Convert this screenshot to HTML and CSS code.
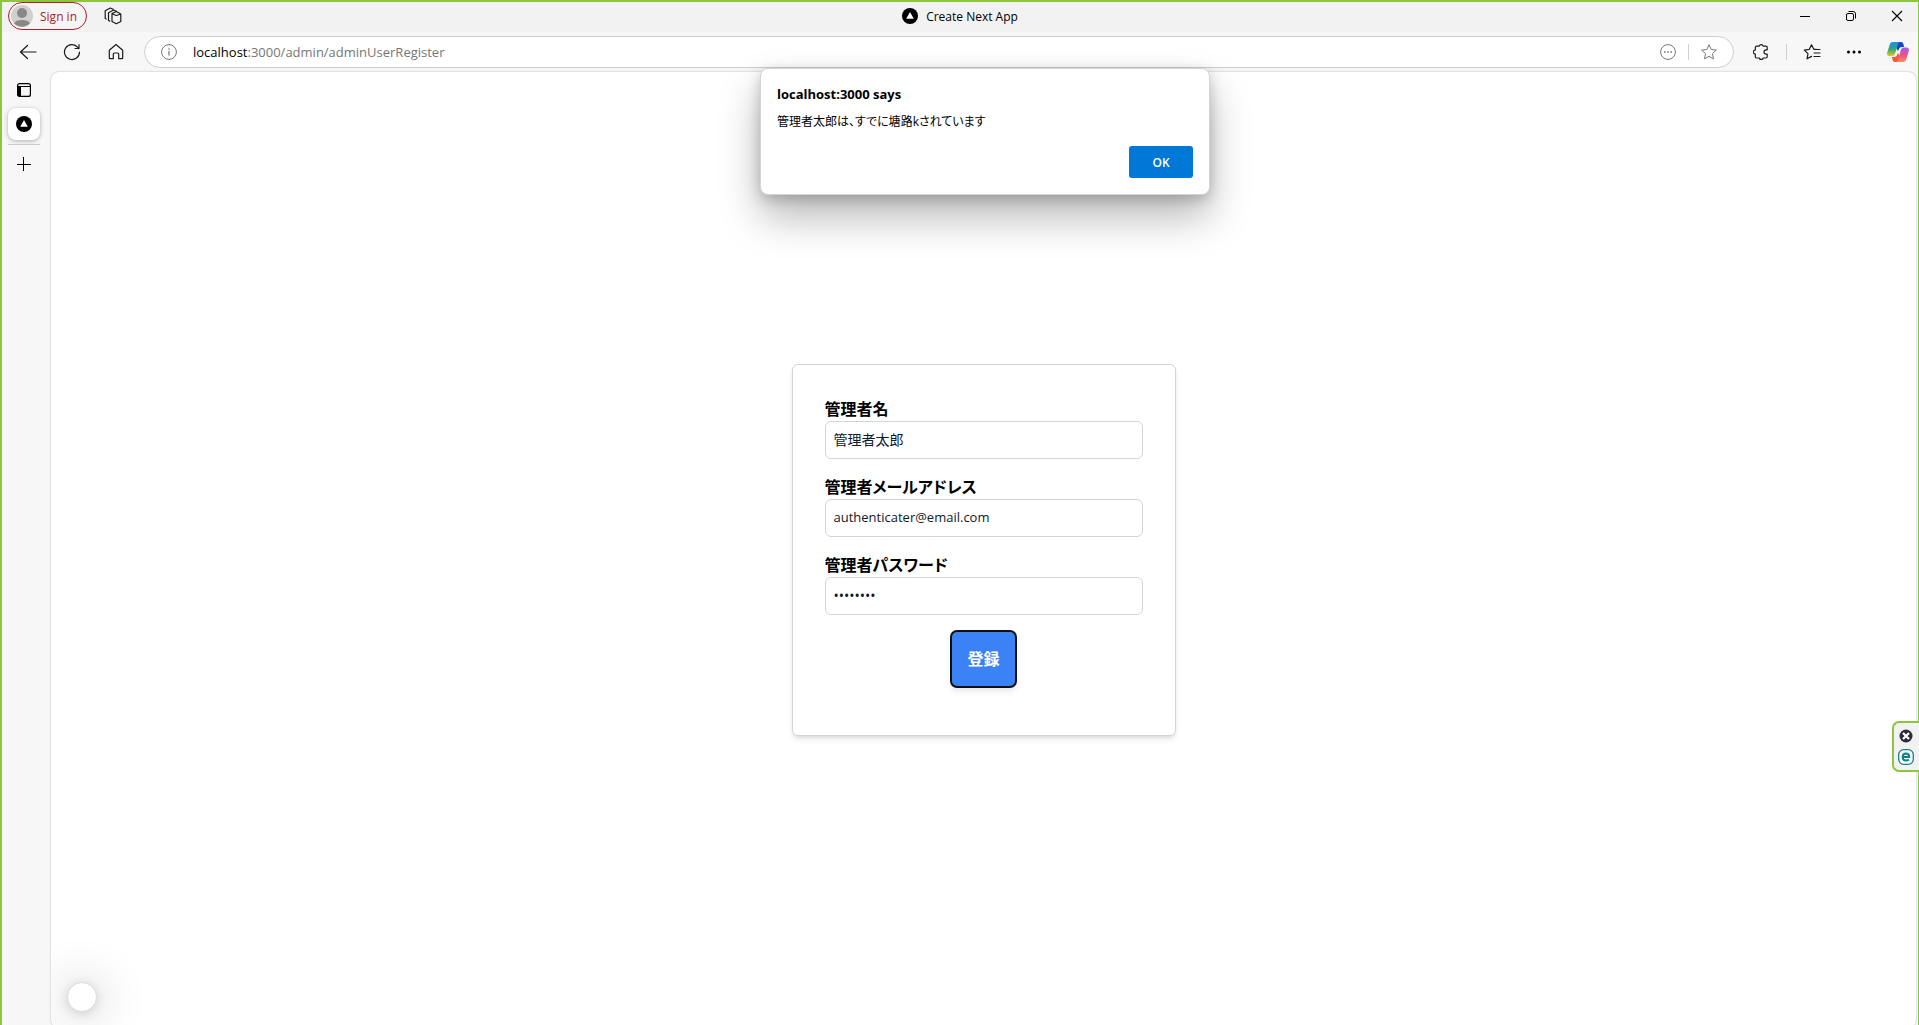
FILE: index.html
```html
<!DOCTYPE html>
<html lang="ja">
<head>
<meta charset="utf-8">
<meta name="viewport" content="width=device-width, initial-scale=1">
<title>Create Next App</title>
<link rel="stylesheet" href="styles.css">
</head>
<body>
<div class="window">
  <header class="titlebar">
    <div class="titlebar-left">
      <button class="profile" type="button">
        <svg class="avatar" width="22" height="22" viewBox="0 0 22 22" aria-hidden="true"><circle cx="11" cy="11" r="11" fill="#d2d0ce"/><circle cx="11" cy="8" r="5" fill="#8a8886"/><path d="M3 18.200a8.500 5 0 0 1 16 0A11 11 0 0 1 3 18.200Z" fill="#8a8886"/></svg>
        <span>Sign in</span>
      </button>
      <button class="icon-btn" type="button" aria-label="Workspaces">
        <svg width="18" height="18" viewBox="0 0 18 18" fill="none" stroke="#1b1b1b" stroke-width="1.200" stroke-linejoin="round" stroke-linecap="round"><path d="M8 8.200v6.300l4.300 2.300 4.500-2.300V7l-4.500-2.500L8 6.500zM8 6.800l4.300 1.700M12.500 8.500 16.800 7M4.500 13.500V5.800l5-2.800 3 1.300M1.200 11.500V3.800l5-2.800 3 1.200M1.200 11.500l1 .5M4.500 13.500l1.200.6"/></svg>
      </button>
    </div>
    <div class="page-title">
      <svg width="16" height="16" viewBox="0 0 16 16" aria-hidden="true"><circle cx="8" cy="8" r="8"/><path d="m8 4 3.800 6.700H4.200z" fill="#fff"/></svg>
      <span>Create Next App</span>
    </div>
    <div class="window-controls">
      <button class="icon-btn" type="button" aria-label="Minimize"><svg width="12" height="12" viewBox="0 0 12 12" stroke="#000"><path d="M1 6.500h10"/></svg></button>
      <button class="icon-btn" type="button" aria-label="Restore"><svg width="12" height="12" viewBox="0 0 12 12" fill="none" stroke="#000"><rect x="1.500" y="3.500" width="7" height="7" rx="1.500"/><path d="M3.500 1.500H8A2.500 2.500 0 0 1 10.500 4v4.500"/></svg></button>
      <button class="icon-btn" type="button" aria-label="Close"><svg width="12" height="12" viewBox="0 0 12 12" stroke="#000" stroke-width="1.100"><path d="m1 1 10 10M11 1 1 11"/></svg></button>
    </div>
  </header>

  <nav class="toolbar" aria-label="Browser">
    <div class="nav-buttons">
      <button class="icon-btn" type="button" aria-label="Back"><svg width="18" height="18" viewBox="0 0 18 18" fill="none" stroke="#1b1b1b" stroke-width="1.200" stroke-linecap="round" stroke-linejoin="round"><path d="M17 9H1.500M8.500 2.500 1.500 9l7 6.500"/></svg></button>
      <button class="icon-btn" type="button" aria-label="Refresh"><svg width="18" height="18" viewBox="0 0 18 18" fill="none" stroke="#1b1b1b" stroke-width="1.200" stroke-linecap="round" stroke-linejoin="round"><path d="M16.500 9A7.500 7.500 0 1 1 14.800 4.300L16 5.500M16 1.500v4h-4"/></svg></button>
      <button class="icon-btn" type="button" aria-label="Home"><svg width="18" height="18" viewBox="0 0 18 18" fill="none" stroke="#1b1b1b" stroke-width="1.200" stroke-linejoin="round"><path d="M9 1.500 2.300 7.200v7.500a1 1 0 0 0 1 1h3V11a1 1 0 0 1 1-1h3.400a1 1 0 0 1 1 1v4.700h3a1 1 0 0 0 1-1V7.200z"/></svg></button>
    </div>
    <div class="address">
      <svg width="16" height="16" viewBox="0 0 16 16" fill="none" stroke="#767676" aria-hidden="true"><circle cx="8" cy="8" r="7.400"/><path d="M8 7v4.500M8 4.300v1.400" stroke-width="1.200"/></svg>
      <span class="url"><span class="host">localhost</span>:3000/admin/adminUserRegister</span>
      <div class="address-actions">
        <button class="icon-btn" type="button" aria-label="Page options"><svg width="16" height="16" viewBox="0 0 16 16" fill="none" stroke="#767676"><circle cx="8" cy="8" r="7.400"/><path d="M4 8h1.600M7.200 8h1.600M10.400 8H12" stroke-width="1.600"/></svg></button>
        <span class="divider"></span>
        <button class="icon-btn" type="button" aria-label="Add to favorites"><svg width="16" height="16" viewBox="0 0 16 16" fill="none" stroke="#767676" stroke-linejoin="round"><path d="m8 .8 2.200 4.700 5.100.6-3.800 3.500 1 5.200L8 12.300l-4.500 2.500 1-5.200L.7 6.100l5.100-.6z"/></svg></button>
      </div>
    </div>
    <div class="tools">
      <button class="icon-btn" type="button" aria-label="Extensions"><svg width="16" height="16" viewBox="0 0 16 16" fill="none" stroke="#1b1b1b" stroke-width="1.200" stroke-linejoin="round"><path d="M3.500 2.200h2.800a2 2 0 0 1 3.900 0H13a1.200 1.200 0 0 1 1.200 1.200v2.400h-1a2.200 2.200 0 0 0 0 4.400h1v2.600A1.200 1.200 0 0 1 13 14h-2.800a2 2 0 0 1-3.900 0H3.500a1.200 1.200 0 0 1-1.200-1.200v-2.700a2 2 0 0 1 0-4V3.400a1.200 1.200 0 0 1 1.200-1.200z"/></svg></button>
      <span class="divider"></span>
      <button class="icon-btn" type="button" aria-label="Favorites"><svg width="18" height="16" viewBox="0 0 18 16" fill="none" stroke="#1b1b1b" stroke-width="1.200" stroke-linejoin="round" stroke-linecap="round"><path d="M14.500 5.500 10.700 5 8.500.8 6.300 5.300l-5 .8L5 9.600l-1 5.200 4.500-2.400M11 5.500h6M11 9h6M11 12.500h6"/></svg></button>
      <button class="icon-btn" type="button" aria-label="Settings and more"><svg width="16" height="16" viewBox="0 0 16 16"><circle cx="2.500" cy="8" r="1.500"/><circle cx="8" cy="8" r="1.500"/><circle cx="13.500" cy="8" r="1.500"/></svg></button>
      <button class="icon-btn" type="button" aria-label="Copilot">
        <svg width="22" height="20" viewBox="0 0 22 20">
          <defs>
            <linearGradient id="cool" x1="0" y1="0" x2="0" y2="1"><stop offset="0" stop-color="#1b90e8"/><stop offset=".5" stop-color="#2aa876"/><stop offset="1" stop-color="#f0c419"/></linearGradient>
            <linearGradient id="warm" x1="0" y1="0" x2="0" y2="1"><stop offset="0" stop-color="#a45af2"/><stop offset=".5" stop-color="#e8518d"/><stop offset="1" stop-color="#ff8a5c"/></linearGradient>
          </defs>
          <path d="M10 0h4c1.500 0 2 .8 2.400 2.200l.8 2.800h-2.400c-1.500 0-2.400.8-2.900 2.200L11 9 8.500 5z" fill="#1747c8"/>
          <path d="M6 0h7c-1.200.3-1.800 1.200-2.200 2.500L8.300 11c-.6 2-1.500 3-3.300 3H2.500C.5 14-.4 12.500.2 10.500L2.700 2.700C3.300.9 4.200 0 6 0z" fill="url(#cool)"/>
          <path d="M12 20H8c-1.500 0-2-.8-2.400-2.200L4.800 15h2.400c1.500 0 2.400-.8 2.900-2.200L11 11l2.500 4z" fill="#f45a3c"/>
          <path d="M16 20H9c1.200-.3 1.800-1.200 2.200-2.500L13.700 8.500c.6-2 1.500-3 3.300-3h2.500c2 0 2.900 1.500 2.300 3.500l-2.500 8.300C18.700 19.100 17.800 20 16 20z" fill="url(#warm)"/>
        </svg>
      </button>
    </div>
  </nav>

  <div class="workspace">
    <aside class="tab-rail" aria-label="Tabs">
      <button class="icon-btn" type="button" aria-label="Tab actions"><svg width="14" height="14" viewBox="0 0 14 14"><rect x=".6" y=".6" width="12.800" height="12.800" rx="2" fill="none" stroke="#000" stroke-width="1.200"/><path d="M1 3.500h12.500" stroke="#000"/><path d="M.6 3.500H4v10H2A1.500 1.500 0 0 1 .6 12z"/></svg></button>
      <button class="icon-btn tab" type="button" aria-label="Create Next App"><svg width="16" height="16" viewBox="0 0 16 16"><circle cx="8" cy="8" r="8"/><path d="m8 4 3.800 6.700H4.200z" fill="#fff"/></svg></button>
      <hr class="rail-line">
      <button class="icon-btn" type="button" aria-label="New tab"><svg width="14" height="14" viewBox="0 0 14 14" stroke="#000"><path d="M6.500 0v14M0 7.500h14"/></svg></button>
    </aside>

    <main class="page">
      <form class="card">
        <div class="field">
          <label for="name">管理者名</label>
          <input id="name" type="text" value="管理者太郎">
        </div>
        <div class="field">
          <label for="email">管理者メールアドレス</label>
          <input id="email" type="email" value="authenticater@email.com">
        </div>
        <div class="field">
          <label for="password">管理者パスワード</label>
          <input id="password" type="password" value="password">
        </div>
        <button class="submit" type="button">登録</button>
      </form>
      <button class="bubble" type="button" aria-label="Status"></button>
    </main>
  </div>

  <section class="dialog" role="alertdialog" aria-labelledby="dialog-title" aria-describedby="dialog-text">
    <h1 id="dialog-title">localhost:3000 says</h1>
    <p id="dialog-text">管理者太郎は、すでに塘路kされています</p>
    <button class="ok" type="button">OK</button>
  </section>

  <div class="side-widget">
    <button class="icon-btn" type="button" aria-label="Dismiss"><svg width="14" height="14" viewBox="0 0 14 14"><circle cx="7" cy="7" r="6.500" fill="#2b2d3a"/><path d="m4 4 6 6M10 4l-6 6" stroke="#fff" stroke-width="2.200"/></svg></button>
    <button class="icon-btn" type="button" aria-label="Open helper"><svg width="16" height="16" viewBox="0 0 16 16" fill="none" stroke="#0e8088"><rect x=".7" y=".7" width="14.600" height="14.600" rx="5" fill="#fff" stroke-width="1.300"/><path d="M4.700 8h6.500c0-2.200-1.300-3.500-3.200-3.500S4.700 6 4.700 8s1.300 3.500 3.400 3.500c1.100 0 2-.3 2.700-1" stroke-width="2"/></svg></button>
  </div>
</div>
</body>
</html>
```
FILE: styles.css
```css
*, *::before, *::after {
  box-sizing: border-box;
}

body {
  margin: 0;
  height: 100vh;
  overflow: hidden;
  font-family: "Open Sans", "Noto Sans CJK JP", sans-serif;
  font-size: 12px;
  color: #000;
  background: #f7f7f7;
}

button,
input {
  font: inherit;
}

svg {
  display: block;
  flex: none;
}

.window {
  position: relative;
  display: flex;
  flex-direction: column;
  height: calc(100vh + 3px);
  border: solid #8cc63f;
  border-width: 2px 1px 0 2px;
}

.icon-btn {
  display: grid;
  place-items: center;
  flex: none;
  padding: 0;
  border: 0;
  background: none;
}

.divider {
  width: 1px;
  height: 16px;
  background: #d0d0d0;
}

/* Title bar */
.titlebar {
  display: grid;
  grid-template-columns: 1fr auto 1fr;
  align-items: center;
  height: 30px;
  padding-bottom: 2px;
  background: #f2f2f2;
}

.titlebar-left {
  display: flex;
  align-items: center;
  gap: 17px;
  padding-left: 6px;
}

.profile {
  display: flex;
  align-items: center;
  gap: 7px;
  height: 28px;
  padding: 0 9px 0 2px;
  border: 1px solid #b01e28;
  border-radius: 14px;
  background: #f5f5f5;
  color: #b01e1e;
}

.page-title {
  display: flex;
  align-items: center;
  gap: 8px;
}

.window-controls {
  display: flex;
  justify-content: flex-end;
  margin-right: -2px;
}

.window-controls .icon-btn {
  width: 46px;
  height: 28px;
}

/* Toolbar */
.toolbar {
  display: flex;
  align-items: center;
  height: 40px;
  background: #f7f7f7;
}

.nav-buttons {
  display: flex;
  gap: 26px;
  padding: 0 19px 0 17px;
}

.address {
  display: flex;
  align-items: center;
  flex: 1;
  height: 32px;
  padding: 0 16px;
  border: 1px solid #cfcfcf;
  border-radius: 16px;
  background: #fff;
}

.url {
  flex: 1;
  padding-left: 16px;
  font-size: 13px;
  color: #767676;
}

.host {
  color: #000;
}

.address-actions {
  display: flex;
  align-items: center;
  gap: 12px;
}

.tools {
  display: flex;
  align-items: center;
  padding: 0 9px 0 18px;
  gap: 16px;
}

.tools .icon-btn {
  min-width: 18px;
}

.tools .icon-btn + .icon-btn {
  margin-left: 8px;
}

/* Content area */
.workspace {
  display: flex;
  flex: 1;
  padding-right: 2px;
}

.tab-rail {
  display: flex;
  flex-direction: column;
  align-items: center;
  width: 49px;
  padding: 11px 11px 0 6px;
}

.tab {
  width: 32px;
  height: 32px;
  margin-top: 11px;
  border-radius: 8px;
  background: #fff;
  box-shadow: 0 1px 4px rgba(0, 0, 0, .3);
}

.rail-line {
  width: 32px;
  margin: 4px 0 12px;
  border: 0;
  border-top: 1px solid #cdcdcd;
}

.page {
  position: relative;
  display: grid;
  place-items: center;
  flex: 1;
  overflow: hidden;
  border-radius: 8px;
  background: #fff;
  box-shadow: 0 0 2px rgba(0, 0, 0, .3);
}

.card {
  display: flex;
  flex-direction: column;
  gap: 16px;
  width: 384px;
  padding: 32px 32px 48px;
  border: 1px solid #d1d5db;
  border-radius: 6px;
  background: #fff;
  box-shadow: 0 4px 6px -1px rgba(0, 0, 0, .1), 0 2px 4px -2px rgba(0, 0, 0, .1);
}

.field {
  display: flex;
  flex-direction: column;
}

.field label {
  font-size: 16px;
  font-weight: 600;
  line-height: 24px;
  font-feature-settings: "palt";
}

.field input {
  width: 100%;
  height: 38px;
  padding: 7px 8px 9px;
  border: 1px solid #d1d5db;
  border-radius: 6px;
  background: #fff;
  color: #111827;
  font-size: 14px;
  line-height: 20px;
}

.field input[type="email"] {
  font-size: 13px;
}

.submit {
  align-self: center;
  padding: 16px;
  border: 0;
  border-radius: 6px;
  outline: 2px solid #101010;
  outline-offset: -1px;
  background: #3b82f6;
  color: #fff;
  font-size: 16px;
  font-weight: 700;
  line-height: 24px;
  box-shadow: 0 4px 6px rgba(0, 0, 0, .1);
}

.bubble {
  position: absolute;
  left: 16px;
  bottom: 16px;
  width: 30px;
  height: 30px;
  padding: 0;
  border: 1px solid #dcdcdc;
  border-radius: 50%;
  background: #fff;
  box-shadow: 0 2px 12px rgba(0, 0, 0, .14), 0 2px 48px 8px rgba(0, 0, 0, .14);
}

/* Alert dialog */
.dialog {
  position: absolute;
  top: 66px;
  left: calc(50% + 25px);
  display: flex;
  flex-direction: column;
  width: 450px;
  padding: 15px 16px 16px;
  border: 1px solid #d4d4d4;
  border-radius: 8px;
  background: #fff;
  box-shadow: 0 22px 40px rgba(0, 0, 0, .28), 0 4px 14px rgba(0, 0, 0, .2);
  transform: translateX(-50%);
}

.dialog h1 {
  margin: 0;
  font-size: 13px;
  font-weight: 700;
  line-height: 20px;
}

.dialog p {
  margin: 8px 0 14px;
  font-size: 12px;
  line-height: 20px;
  font-feature-settings: "palt";
}

.ok {
  align-self: flex-end;
  width: 64px;
  height: 32px;
  padding: 0;
  border: 0;
  border-radius: 3px;
  background: #0078d7;
  color: #fff;
  font-weight: 600;
}

/* Floating helper */
.side-widget {
  position: absolute;
  top: 719px;
  right: -1px;
  display: flex;
  flex-direction: column;
  align-items: center;
  gap: 6px;
  width: 27px;
  padding: 6px 5px 5px 4px;
  border: 2px solid #8cc63f;
  border-right: 0;
  border-radius: 7px 0 0 7px;
  background: #f2f2f2;
}
```
